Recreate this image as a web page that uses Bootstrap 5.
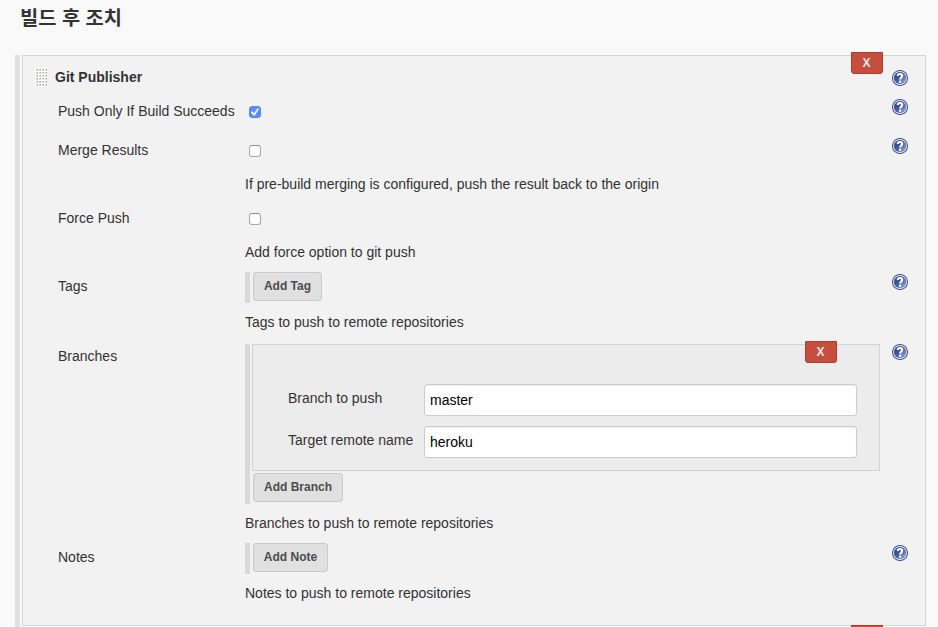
<!DOCTYPE html>
<html lang="ko">
<head>
<meta charset="utf-8">
<meta name="viewport" content="width=device-width, initial-scale=1">
<title>빌드 후 조치</title>
<link href="https://cdn.jsdelivr.net/npm/bootstrap@5.3.0/dist/css/bootstrap.min.css" rel="stylesheet">
<style>
body{background:#f9f9f9;color:#333;font-family:"Liberation Sans","Noto Sans CJK KR",sans-serif;font-size:14px;line-height:20px}
.page-title{font-size:19.8px;line-height:24px;font-weight:700;padding:6px 0 0 20px;margin-bottom:25px;color:#333}
.steps{margin-left:15px;border-left:5px solid #e0e0e0;padding-left:2px;height:572px;overflow:visible}
.panel{width:904px;height:571px;background:#f2f2f2;border:1px solid #d6d6d6;padding:11px 17px 0 13px}
.panel-next{height:1px;border:0;padding:0;background:none}
.del{position:absolute;width:32px;height:22px;background:#c64e3f;border:1px solid #b23c2e;border-radius:0 0 3px 3px;color:#f3e9e8;font-size:12px;font-weight:700;line-height:20px;text-align:center;padding:0 1px 0 0}
.del-main,.del-branch{top:-4px;right:42px}
.del-next{top:-1px;right:43px;height:2px;border-bottom:0;border-radius:0;padding:0}
.grip{width:12px;height:18px;margin:1px 8px 0 -1px}
.opt{padding-left:22px}
.opt-label{width:187px;padding-top:4px;white-space:nowrap}
.opt-body{width:635px}
.help{display:block;width:16px;height:16px;margin-top:2px}
.help-title{margin-top:3px}
.cb{display:block;appearance:none;width:12px;height:12px;margin:9px 0 0 4px;background:#fff;border:1px solid #a8a8a8;border-top-color:#919191;border-radius:3px}
.cb:checked{background:#5b8cfa url("data:image/svg+xml,%3Csvg xmlns='http://www.w3.org/2000/svg' viewBox='0 0 12 12'%3E%3Cpath d='M3 6.4 5.1 8.8 8.8 3.2' fill='none' stroke='white' stroke-width='1.7' stroke-linecap='round' stroke-linejoin='round'/%3E%3C/svg%3E") center/12px 12px;border-color:#5586f2}
.desc{white-space:nowrap}
.r1{height:39px;margin-top:10px}.r2{height:68px}.r3{height:70px}.r4{height:201px}
.r2 .desc{margin-top:17px}
.rep{border-left:5px solid #d9d9d9;padding:0 0 2px 2px;margin-bottom:9px}
.branch-list{margin-top:2px}
.add{display:block;height:29px;margin-left:1px;background:#e0e0e0;border:1px solid #cacaca;border-radius:3px;color:#4d4d4d;font-size:12px;font-weight:700;line-height:16px;padding:5px 0 6px;text-align:center}
.w-tag{width:69px}.w-branch{width:90px}.w-note{width:75px}
.branch{width:628px;height:127px;background:#ececec;border:1px solid #d3d3d3;padding:39px 22px 0 35px;margin-bottom:2px}
.field{height:42px}
.field label{width:136px;padding-top:4px;white-space:nowrap}
.field input{width:433px;height:32px;border:1px solid #ccc;border-radius:3px;box-shadow:inset 0 1px 1px rgba(0,0,0,.075);padding:0 5px;font-size:14px;color:#000;background:#fff}
</style>
<script src="https://cdn.jsdelivr.net/npm/bootstrap@5.3.0/dist/js/bootstrap.bundle.min.js"></script>
</head>
<body>
<svg width="0" height="0" class="position-absolute" aria-hidden="true">
<defs>
<linearGradient id="ball" x1="0" y1="0" x2="1" y2="1"><stop offset="0" stop-color="#2c4283"/><stop offset=".45" stop-color="#3d569d"/><stop offset="1" stop-color="#a6b5df"/></linearGradient>
<symbol id="help" viewBox="0 0 16 16"><circle cx="8" cy="8" r="7.5" fill="#fff" stroke="#43579b" stroke-width="1.1"/><circle cx="8" cy="8" r="6" fill="url(#ball)" stroke="#4a5f9f" stroke-width=".4"/><path d="M5.8 6C5.8 4.5 6.7 4 8 4c1.4 0 2.2.7 2.2 1.8 0 1.6-2 1.7-2 3.6" fill="none" stroke="#fff" stroke-width="2.1"/><rect x="7" y="10.6" width="2.2" height="2.1" fill="#fff"/></symbol>
<pattern id="dots" width="3" height="3" patternUnits="userSpaceOnUse"><rect width="3" height="3" fill="#fff"/><rect x="1" y="1" width="2" height="2" fill="#d8d8d5"/><rect x="2" y="1" width="1" height="1" fill="#a5a5a0"/></pattern>
</defs>
</svg>
<h1 class="page-title">빌드 후 조치</h1>
<main class="steps">
<section class="panel position-relative">
<button class="btn del del-main">X</button>
<div class="d-flex justify-content-between">
<div class="d-flex"><svg class="grip"><rect width="12" height="18" fill="url(#dots)"/></svg><b>Git Publisher</b></div>
<svg class="help help-title"><use href="#help"/></svg>
</div>
<div class="opt d-flex r1">
<label class="opt-label" for="c1">Push Only If Build Succeeds</label><div class="opt-body"><input id="c1" class="cb" type="checkbox" checked></div><svg class="help ms-auto"><use href="#help"/></svg>
</div>
<div class="opt d-flex r2">
<label class="opt-label" for="c2">Merge Results</label><div class="opt-body"><input id="c2" class="cb" type="checkbox"><div class="desc">If pre-build merging is configured, push the result back to the origin</div></div><svg class="help ms-auto"><use href="#help"/></svg>
</div>
<div class="opt d-flex r2">
<label class="opt-label" for="c3">Force Push</label><div class="opt-body"><input id="c3" class="cb" type="checkbox"><div class="desc">Add force option to git push</div></div>
</div>
<div class="opt d-flex r3">
<div class="opt-label">Tags</div><div class="opt-body"><div class="rep"><button class="btn add w-tag">Add Tag</button></div><div class="desc">Tags to push to remote repositories</div></div><svg class="help ms-auto"><use href="#help"/></svg>
</div>
<div class="opt d-flex r4">
<div class="opt-label">Branches</div>
<div class="opt-body">
<div class="rep branch-list">
<div class="branch position-relative">
<button class="btn del del-branch">X</button>
<div class="field d-flex"><label for="b">Branch to push</label><input id="b" value="master"></div>
<div class="field d-flex"><label for="t">Target remote name</label><input id="t" value="heroku"></div>
</div>
<button class="btn add w-branch">Add Branch</button>
</div>
<div class="desc">Branches to push to remote repositories</div>
</div><svg class="help ms-auto"><use href="#help"/></svg>
</div>
<div class="opt d-flex">
<div class="opt-label">Notes</div><div class="opt-body"><div class="rep"><button class="btn add w-note">Add Note</button></div><div class="desc">Notes to push to remote repositories</div></div><svg class="help ms-auto"><use href="#help"/></svg>
</div>
</section>
<section class="panel panel-next position-relative"><button class="btn del del-next" aria-label="X"></button></section>
</main>
</body>
</html>
